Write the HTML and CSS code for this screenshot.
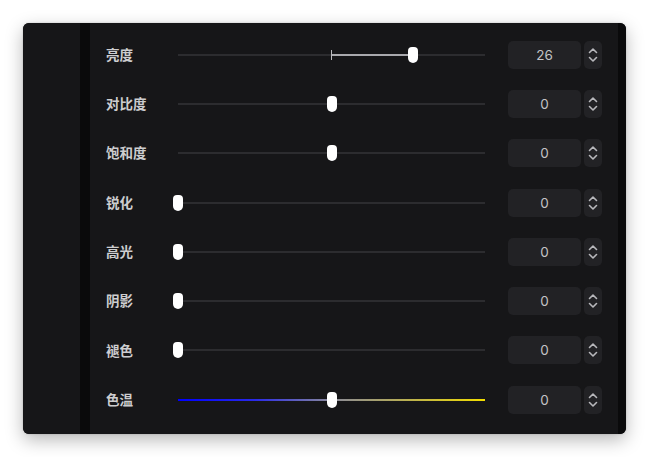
FILE: index.html
```html
<!DOCTYPE html>
<html lang="zh">
<head>
<meta charset="utf-8">
<link rel="stylesheet" href="styles.css">
</head>
<body>
<div class="window">
  <div class="side"></div>
  <div class="stripe"></div>
  <div class="content">
    <div class="row">
      <span class="label">亮度</span>
      <div class="slider">
        <div class="track"></div>
        <div class="fill" style="left:50%;width:26.4%"></div>
        <div class="tick" style="left:50%"></div>
        <div class="thumb" style="left:76.4%"></div>
      </div>
      <div class="num">26</div>
      <div class="step"><svg viewBox="0 0 18 28" width="18" height="28"><path d="M5.5 11.5 9 8l3.5 3.5M5.5 16.5 9 20l3.5-3.5" fill="none" stroke="#b8b8bc" stroke-width="1.6" stroke-linecap="round" stroke-linejoin="round"/></svg></div>
    </div>
    <div class="row">
      <span class="label">对比度</span>
      <div class="slider"><div class="track"></div><div class="thumb" style="left:50%"></div></div>
      <div class="num">0</div>
      <div class="step"><svg viewBox="0 0 18 28" width="18" height="28"><path d="M5.5 11.5 9 8l3.5 3.5M5.5 16.5 9 20l3.5-3.5" fill="none" stroke="#b8b8bc" stroke-width="1.6" stroke-linecap="round" stroke-linejoin="round"/></svg></div>
    </div>
    <div class="row">
      <span class="label">饱和度</span>
      <div class="slider"><div class="track"></div><div class="thumb" style="left:50%"></div></div>
      <div class="num">0</div>
      <div class="step"><svg viewBox="0 0 18 28" width="18" height="28"><path d="M5.5 11.5 9 8l3.5 3.5M5.5 16.5 9 20l3.5-3.5" fill="none" stroke="#b8b8bc" stroke-width="1.6" stroke-linecap="round" stroke-linejoin="round"/></svg></div>
    </div>
    <div class="row">
      <span class="label">锐化</span>
      <div class="slider"><div class="track"></div><div class="thumb" style="left:0%"></div></div>
      <div class="num">0</div>
      <div class="step"><svg viewBox="0 0 18 28" width="18" height="28"><path d="M5.5 11.5 9 8l3.5 3.5M5.5 16.5 9 20l3.5-3.5" fill="none" stroke="#b8b8bc" stroke-width="1.6" stroke-linecap="round" stroke-linejoin="round"/></svg></div>
    </div>
    <div class="row">
      <span class="label">高光</span>
      <div class="slider"><div class="track"></div><div class="thumb" style="left:0%"></div></div>
      <div class="num">0</div>
      <div class="step"><svg viewBox="0 0 18 28" width="18" height="28"><path d="M5.5 11.5 9 8l3.5 3.5M5.5 16.5 9 20l3.5-3.5" fill="none" stroke="#b8b8bc" stroke-width="1.6" stroke-linecap="round" stroke-linejoin="round"/></svg></div>
    </div>
    <div class="row">
      <span class="label">阴影</span>
      <div class="slider"><div class="track"></div><div class="thumb" style="left:0%"></div></div>
      <div class="num">0</div>
      <div class="step"><svg viewBox="0 0 18 28" width="18" height="28"><path d="M5.5 11.5 9 8l3.5 3.5M5.5 16.5 9 20l3.5-3.5" fill="none" stroke="#b8b8bc" stroke-width="1.6" stroke-linecap="round" stroke-linejoin="round"/></svg></div>
    </div>
    <div class="row">
      <span class="label">褪色</span>
      <div class="slider"><div class="track"></div><div class="thumb" style="left:0%"></div></div>
      <div class="num">0</div>
      <div class="step"><svg viewBox="0 0 18 28" width="18" height="28"><path d="M5.5 11.5 9 8l3.5 3.5M5.5 16.5 9 20l3.5-3.5" fill="none" stroke="#b8b8bc" stroke-width="1.6" stroke-linecap="round" stroke-linejoin="round"/></svg></div>
    </div>
    <div class="row">
      <span class="label">色温</span>
      <div class="slider"><div class="track temp"></div><div class="thumb" style="left:50%"></div></div>
      <div class="num">0</div>
      <div class="step"><svg viewBox="0 0 18 28" width="18" height="28"><path d="M5.5 11.5 9 8l3.5 3.5M5.5 16.5 9 20l3.5-3.5" fill="none" stroke="#b8b8bc" stroke-width="1.6" stroke-linecap="round" stroke-linejoin="round"/></svg></div>
    </div>
  </div>
  <div class="stripe right"></div>
</div>
</body>
</html>
```
FILE: styles.css
```css
html, body {
  margin: 0;
  padding: 0;
  background: #ffffff;
}
body {
  width: 650px;
  height: 457px;
  overflow: hidden;
  font-family: "Noto Sans CJK SC", "Noto Sans", sans-serif;
}
.window {
  margin: 23px 0 0 23px;
  width: 603px;
  height: 411px;
  display: flex;
  background: #161618;
  border-radius: 6px;
  overflow: hidden;
  box-shadow: 0 6px 18px rgba(0, 0, 0, 0.28), 0 0 2px rgba(0, 0, 0, 0.2);
}
.side {
  width: 57px;
  background: #161618;
}
.stripe {
  width: 10px;
  background: #0a0a0b;
}
.stripe.right {
  width: 8px;
}
.content {
  flex: 1;
  padding: 7px 16px 0 16px;
  display: flex;
  flex-direction: column;
}
.row {
  height: 49.3px;
  display: flex;
  align-items: center;
}
.label {
  width: 72px;
  font-size: 13.5px;
  font-weight: 700;
  color: #cdcdcf;
  line-height: 1;
}
.slider {
  position: relative;
  width: 307px;
  height: 20px;
}
.track {
  position: absolute;
  left: 0;
  right: 0;
  top: 9px;
  height: 2px;
  background: #2c2c2f;
}
.track.temp {
  background: linear-gradient(90deg, #0000ff 0%, #2a2ae8 25%, #8a8a9a 50%, #b0a860 70%, #f2dd00 100%);
}
.fill {
  position: absolute;
  top: 9px;
  height: 2px;
  background: #a9a9ad;
}
.tick {
  position: absolute;
  top: 5px;
  width: 1px;
  height: 10px;
  margin-left: -0.5px;
  background: #b9b9bc;
}
.thumb {
  position: absolute;
  top: 2px;
  width: 10px;
  height: 16px;
  margin-left: -5px;
  background: #ffffff;
  border-radius: 4px 4px 5px 5px;
}
.num {
  margin-left: 23px;
  width: 73px;
  height: 28px;
  border-radius: 5px;
  background: #222225;
  color: #c4c4c6;
  font-family: "Inter", "Noto Sans", sans-serif;
  font-size: 13.5px;
  display: flex;
  align-items: center;
  justify-content: center;
}
.step {
  margin-left: 3px;
  width: 18px;
  height: 28px;
  border-radius: 5px;
  background: #222225;
}
.step svg {
  display: block;
}
```
